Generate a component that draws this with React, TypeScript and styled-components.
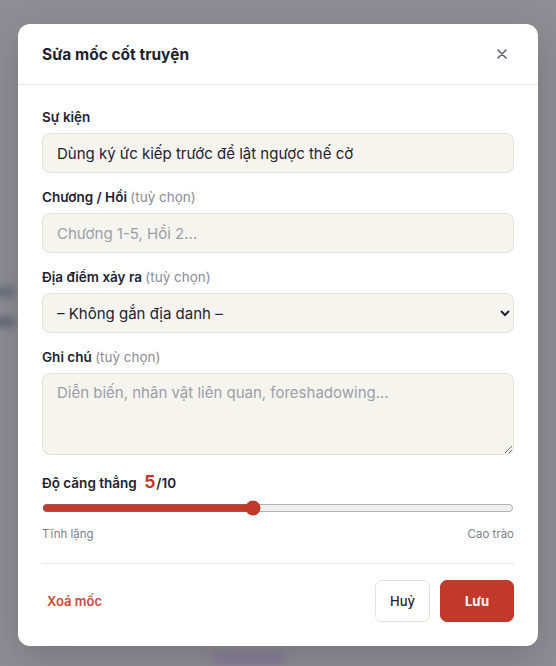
import React, { useState } from 'react';
import styled, { createGlobalStyle } from 'styled-components';

const GlobalStyle = createGlobalStyle`
  html, body {
    margin: 0;
    padding: 0;
    height: 100%;
  }
  body {
    font-family: 'Inter', 'Noto Sans', sans-serif;
    color: #1e2230;
  }
  #root {
    height: 100%;
  }
`;

const Backdrop = styled.div`
  position: relative;
  width: 556px;
  height: 666px;
  overflow: hidden;
  background: #8f8e95;
  display: flex;
  justify-content: center;
  padding-top: 24px;
  box-sizing: border-box;
`;

// blurred page content peeking out from behind the dialog
const Smudge = styled.div<{ $top: number; $left: number; $w: number; $color: string }>`
  position: absolute;
  top: ${p => p.$top}px;
  left: ${p => p.$left}px;
  width: ${p => p.$w}px;
  height: 8px;
  border-radius: 4px;
  background: ${p => p.$color};
  filter: blur(4px);
`;

const Modal = styled.div`
  position: relative;
  width: 520px;
  height: 622px;
  background: #ffffff;
  border-radius: 12px;
  display: flex;
  flex-direction: column;
  box-shadow: 0 12px 40px rgba(0, 0, 0, 0.18);
`;

const Header = styled.div`
  height: 60px;
  padding: 0 24px;
  display: flex;
  align-items: center;
  justify-content: space-between;
  border-bottom: 1px solid #e9e5dc;
`;

const Title = styled.h2`
  margin: 0;
  font-size: 15.5px;
  font-weight: 700;
  color: #1e2230;
`;

const CloseButton = styled.button`
  border: none;
  background: none;
  padding: 0;
  width: 24px;
  height: 24px;
  display: flex;
  align-items: center;
  justify-content: center;
  color: #5d6170;
  cursor: pointer;
`;

const Body = styled.div`
  flex: 1;
  padding: 23px 24px 24px;
  display: flex;
  flex-direction: column;
`;

const Field = styled.div`
  display: flex;
  flex-direction: column;
  gap: 7px;
  margin-bottom: 15px;
`;

const Label = styled.label`
  font-size: 13.5px;
  line-height: 18px;
  font-weight: 600;
  color: #1e2230;
`;

const Hint = styled.span`
  font-weight: 400;
  color: #8b8d96;
`;

const fieldBase = `
  box-sizing: border-box;
  width: 100%;
  background: #f5f4ef;
  border: 1px solid #e6e2d8;
  border-radius: 8px;
  font-family: 'Inter', 'Noto Sans', sans-serif;
  font-size: 15px;
  color: #1e2230;
  outline: none;
  &::placeholder {
    color: #9c9ea6;
  }
`;

const TextInput = styled.input`
  ${fieldBase}
  height: 40px;
  padding: 0 14px;
`;

const Select = styled.select`
  ${fieldBase}
  height: 40px;
  padding: 0 10px;
`;

const TextArea = styled.textarea`
  ${fieldBase}
  height: 82px;
  padding: 9px 14px;
  resize: vertical;
`;

const TensionLabel = styled.div`
  font-size: 13.5px;
  line-height: 22px;
  font-weight: 600;
  color: #1e2230;
  margin-top: 1px;
`;

const TensionValue = styled.span`
  font-size: 17.5px;
  font-weight: 700;
  color: #c0392b;
  margin: 0 1px 0 4px;
`;

const Range = styled.input`
  width: 100%;
  margin: 6px 0 0;
  accent-color: #c0392b;
`;

const RangeEnds = styled.div`
  display: flex;
  justify-content: space-between;
  font-size: 11.5px;
  color: #7d808a;
  margin-top: 11px;
`;

const Footer = styled.div`
  margin-top: auto;
  border-top: 1px solid #e9e5dc;
  padding-top: 16px;
  display: flex;
  align-items: center;
  justify-content: space-between;
`;

const DangerLink = styled.button`
  border: none;
  background: none;
  padding: 0 5px;
  font-family: inherit;
  font-size: 13px;
  font-weight: 600;
  color: #c94a3a;
  cursor: pointer;
`;

const Actions = styled.div`
  display: flex;
  gap: 10px;
`;

const Button = styled.button<{ $primary?: boolean }>`
  height: 42px;
  padding: 0 ${p => (p.$primary ? 24 : 14)}px;
  border-radius: 7px;
  font-family: inherit;
  font-size: 13px;
  font-weight: ${p => (p.$primary ? 700 : 500)};
  border: 1px solid ${p => (p.$primary ? '#c0392b' : '#e6e2d8')};
  background: ${p => (p.$primary ? '#c0392b' : '#ffffff')};
  color: ${p => (p.$primary ? '#ffffff' : '#1e2230')};
  cursor: pointer;
`;

export default function App() {
  const [tension, setTension] = useState(5);

  return (
    <>
      <GlobalStyle />
      <Backdrop>
        <Smudge $top={288} $left={-10} $w={26} $color="#5f6675" />
        <Smudge $top={318} $left={-10} $w={26} $color="#5d5f72" />
        <Smudge $top={654} $left={212} $w={74} $color="#84779c" />
        <Modal>
          <Header>
            <Title>Sửa mốc cốt truyện</Title>
            <CloseButton aria-label="Đóng">
              <svg width="10" height="10" viewBox="0 0 10 10" fill="none" stroke="currentColor" strokeWidth="1.6" strokeLinecap="round">
                <path d="M1 1l8 8M9 1l-8 8" />
              </svg>
            </CloseButton>
          </Header>
          <Body>
            <Field>
              <Label>Sự kiện</Label>
              <TextInput defaultValue="Dùng ký ức kiếp trước để lật ngược thế cờ" />
            </Field>
            <Field>
              <Label>
                Chương / Hồi <Hint>(tuỳ chọn)</Hint>
              </Label>
              <TextInput placeholder="Chương 1-5, Hồi 2..." />
            </Field>
            <Field>
              <Label>
                Địa điểm xảy ra <Hint>(tuỳ chọn)</Hint>
              </Label>
              <Select defaultValue="">
                <option value="">– Không gắn địa danh –</option>
              </Select>
            </Field>
            <Field>
              <Label>
                Ghi chú <Hint>(tuỳ chọn)</Hint>
              </Label>
              <TextArea placeholder="Diễn biến, nhân vật liên quan, foreshadowing..." />
            </Field>
            <TensionLabel>
              Độ căng thẳng <TensionValue>{tension}</TensionValue>/10
            </TensionLabel>
            <Range
              type="range"
              min={1}
              max={10}
              value={tension}
              onChange={e => setTension(Number(e.target.value))}
            />
            <RangeEnds>
              <span>Tĩnh lặng</span>
              <span>Cao trào</span>
            </RangeEnds>
            <Footer>
              <DangerLink>Xoá mốc</DangerLink>
              <Actions>
                <Button>Huỷ</Button>
                <Button $primary>Lưu</Button>
              </Actions>
            </Footer>
          </Body>
        </Modal>
      </Backdrop>
    </>
  );
}
